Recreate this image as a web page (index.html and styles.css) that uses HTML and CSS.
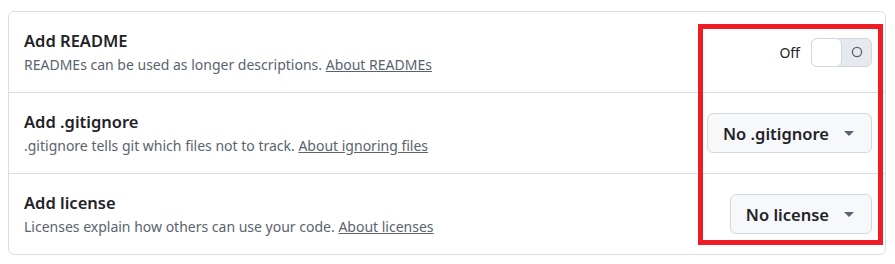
FILE: index.html
```html
<!DOCTYPE html>
<html>
  <head>
    <link rel="stylesheet" href="styles.css">
    <meta charset="utf-8" />
    <title>Repository options</title>
  </head>
  <body>
    <div class="card">
      <div class="row">
        <div class="info">
          <div class="title">Add README</div>
          <div class="desc">READMEs can be used as longer descriptions. <a href="#">About READMEs</a></div>
        </div>
        <div class="control">
          <span class="status">Off</span>
          <button class="toggle">
            <span class="knob"></span>
            <span class="track-icon">
              <svg width="12" height="12" viewBox="0 0 12 12"><circle cx="6" cy="6" r="4.6" fill="none" stroke="#59636e" stroke-width="1.3"/></svg>
            </span>
          </button>
        </div>
      </div>
      <div class="row">
        <div class="info">
          <div class="title">Add .gitignore</div>
          <div class="desc">.gitignore tells git which files not to track. <a href="#">About ignoring files</a></div>
        </div>
        <button class="select">No .gitignore <span class="caret"></span></button>
      </div>
      <div class="row">
        <div class="info">
          <div class="title">Add license</div>
          <div class="desc">Licenses explain how others can use your code. <a href="#">About licenses</a></div>
        </div>
        <button class="select">No license <span class="caret"></span></button>
      </div>
      <div class="highlight"></div>
    </div>
  </body>
</html>
```
FILE: styles.css
```css
body {
  margin: 11px 9px 8px 8px;
  font-family: "Noto Sans", "Open Sans", sans-serif;
  color: #1f2328;
  background: #ffffff;
}

.card {
  position: relative;
  border: 1px solid #d8dee4;
  border-radius: 6px;
}

.row {
  display: flex;
  align-items: center;
  justify-content: space-between;
  height: 80px;
  padding: 0 13px 0 15px;
  border-top: 1px solid #d8dee4;
}

.row:first-child {
  border-top: none;
}

.title {
  font-size: 16.5px;
  font-weight: 600;
  line-height: 24px;
}

.desc {
  font-size: 14px;
  line-height: 20px;
  margin-top: 2px;
  color: #59636e;
}

.desc a {
  color: #59636e;
  text-decoration: underline;
}

.control {
  display: flex;
  align-items: center;
  gap: 11px;
}

.status {
  font-size: 14px;
}

.toggle {
  display: flex;
  align-items: stretch;
  width: 61px;
  height: 29px;
  padding: 0;
  border: 1px solid #d1d9e0;
  border-radius: 6px;
  background: #e6eaef;
}

.knob {
  width: 29px;
  margin: -1px 0 -1px -1px;
  background: #ffffff;
  border: 1px solid #d1d9e0;
  border-radius: 6px;
}

.track-icon {
  flex: 1;
  display: flex;
  align-items: center;
  justify-content: center;
}

.select {
  display: flex;
  align-items: center;
  gap: 15px;
  height: 40px;
  padding: 0 17px 0 15px;
  font-family: inherit;
  font-size: 16.5px;
  font-weight: 600;
  color: #1f2328;
  background: #f6f8fa;
  border: 1px solid #d1d9e0;
  border-radius: 6px;
}

.caret {
  width: 0;
  height: 0;
  border-left: 5px solid transparent;
  border-right: 5px solid transparent;
  border-top: 5px solid #59636e;
}

.highlight {
  position: absolute;
  left: 689px;
  top: 12px;
  width: 175px;
  height: 211px;
  border: 5px solid #ee1c24;
  pointer-events: none;
}
```
